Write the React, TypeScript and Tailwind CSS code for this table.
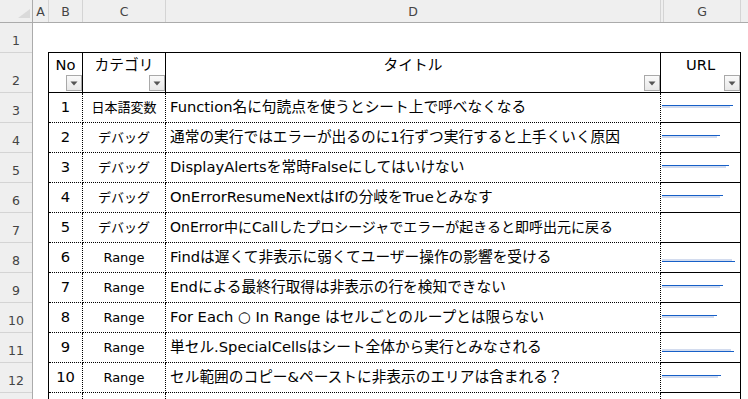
import React from "react";

const rows = [
  { no: 1, cat: "日本語変数", title: "Function名に句読点を使うとシート上で呼べなくなる", url: 71, above: false },
  { no: 2, cat: "デバッグ", title: "通常の実行ではエラーが出るのに1行ずつ実行すると上手くいく原因", url: 58, above: false },
  { no: 3, cat: "デバッグ", title: "DisplayAlertsを常時Falseにしてはいけない", url: 67, above: false },
  { no: 4, cat: "デバッグ", title: "OnErrorResumeNextはIfの分岐をTrueとみなす", url: 61, above: false },
  { no: 5, cat: "デバッグ", title: "OnError中にCallしたプロシージャでエラーが起きると即呼出元に戻る", url: 0, above: false, small: true },
  { no: 6, cat: "Range", title: "Findは遅くて非表示に弱くてユーザー操作の影響を受ける", url: 73, above: true },
  { no: 7, cat: "Range", title: "Endによる最終行取得は非表示の行を検知できない", url: 61, above: false },
  { no: 8, cat: "Range", title: "For Each ○ In Range はセルごとのループとは限らない", url: 55, above: false },
  { no: 9, cat: "Range", title: "単セル.SpecialCellsはシート全体から実行とみなされる", url: 72, above: true },
  { no: 10, cat: "Range", title: "セル範囲のコピー&ペーストに非表示のエリアは含まれる？", url: 59, above: false },
];

const font = "font-['DejaVu_Sans','Noto_Sans_CJK_JP',sans-serif]";

function FilterButton() {
  return (
    <div className="absolute right-0 bottom-[1px] flex h-4 w-4 items-center justify-center border border-[#a9a9a9] bg-gradient-to-b from-[#fafafa] to-[#e8e8e8]">
      <svg width="8" height="5" viewBox="0 0 8 5">
        <polygon points="0.5,0.5 7.5,0.5 4,4.5" fill="#555" />
      </svg>
    </div>
  );
}

// shrunk hyperlink text: a faint smear plus the blue underline
function UrlMark({ w, above }: { w: number; above: boolean }) {
  if (!w) return null;
  const faint = <div className="h-[2px] bg-[#d2dbee]" style={{ width: w - 3 }} />;
  const line = <div className="h-px bg-[#1760c8]" style={{ width: w }} />;
  return (
    <div className={`flex flex-col pl-px ${above ? "pt-[5px]" : "pb-[3px]"}`}>
      {above ? faint : line}
      {above ? line : faint}
    </div>
  );
}

function ColHead({ w, label }: { w: string; label?: string }) {
  return (
    <div className={`${w} flex h-full items-center justify-center border-r border-[#d4d4d4] pt-[2px] text-[12.5px] text-[#444]`}>
      {label}
    </div>
  );
}

export default function App() {
  return (
    <div className={`h-[399px] w-[748px] overflow-hidden bg-white ${font}`}>
      {/* column letters */}
      <div className="flex h-[23px] border-b border-[#ababab] bg-[#efefef]">
        <div className="flex h-full w-[33px] items-end justify-end border-r border-[#ababab] pr-[2px] pb-[4px]">
          <svg width="12" height="9" viewBox="0 0 12 9">
            <polygon points="12,0 12,9 0,9" fill="#dadada" />
          </svg>
        </div>
        <ColHead w="w-[16px]" label="A" />
        <ColHead w="w-[34px]" label="B" />
        <ColHead w="w-[83px]" label="C" />
        <ColHead w="w-[495px]" label="D" />
        <ColHead w="w-[3px]" />
        <ColHead w="w-[77px]" label="G" />
        <div className="flex-1" />
      </div>

      <div className="flex">
        {/* row numbers */}
        <div className="flex w-[33px] shrink-0 flex-col border-r border-[#ababab] bg-[#efefef] text-[12.5px] leading-[16px] text-[#444]">
          {Array.from({ length: 13 }, (_, i) => i + 1).map((n) => (
            <div
              key={n}
              className={`flex shrink-0 items-end justify-center border-b border-[#d4d4d4] pb-[3px] ${n === 2 ? "h-[40px]" : "h-[30px]"}`}
            >
              {n < 13 ? n : null}
            </div>
          ))}
        </div>

        {/* sheet */}
        <div className="pt-[29px] pl-[15px]">
          <div className="w-[693px] border-t border-l border-black text-black">
            <div className="grid h-[40px] grid-cols-[34px_83px_495px_80px] text-[14.7px] leading-[20px]">
              <div className="relative border-r border-b border-r-black border-b-black border-r-dotted pt-[2px] text-center">
                No
                <FilterButton />
              </div>
              <div className="relative border-r border-b border-r-black border-b-black border-r-dotted pt-[2px] text-center">
                カテゴリ
                <FilterButton />
              </div>
              <div className="relative border-r border-b border-r-black border-b-black border-r-dotted pt-[2px] text-center">
                タイトル
                <FilterButton />
              </div>
              <div className="relative border-r border-b border-black pt-[2px] text-center">
                URL
                <FilterButton />
              </div>
            </div>

            {rows.map((r) => (
              <div key={r.no} className="grid h-[30px] grid-cols-[34px_83px_495px_80px]">
                <div className="flex items-center justify-center border-r border-b border-dotted border-black text-[14.7px]">
                  {r.no}
                </div>
                <div className="flex items-center justify-center border-r border-b border-dotted border-black text-[13px]">
                  {r.cat}
                </div>
                <div
                  className={`flex items-center whitespace-nowrap border-r border-b border-dotted border-black pl-[4px] ${r.small ? "text-[14px]" : "text-[14.7px]"}`}
                >
                  {r.title}
                </div>
                <div className="flex items-center border-r border-b border-black border-b-dotted">
                  <UrlMark w={r.url} above={r.above} />
                </div>
              </div>
            ))}

            <div className="grid h-[30px] grid-cols-[34px_83px_495px_80px]">
              <div className="border-r border-dotted border-black" />
              <div className="border-r border-dotted border-black" />
              <div className="border-r border-dotted border-black" />
              <div className="border-r border-black" />
            </div>
          </div>
        </div>
      </div>
    </div>
  );
}
